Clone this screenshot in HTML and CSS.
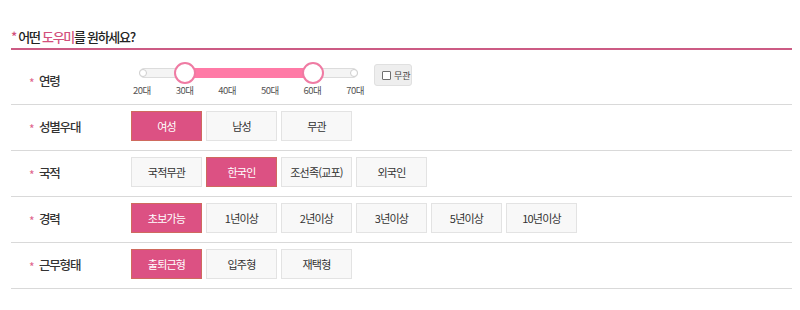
FILE: index.html
```html
<!DOCTYPE html>
<html lang="ko">
<head>
<meta charset="utf-8">
<link rel="stylesheet" href="styles.css">
</head>
<body>
<div class="wrap">
  <h2 class="title"><span class="pink">*</span> 어떤 <span class="pink">도우미</span>를 원하세요?</h2>

  <div class="row row-age">
    <div class="label"><span class="star">*</span>연령</div>
    <div class="slider">
      <div class="track"></div>
      <div class="fill"></div>
      <span class="dot dot-l"></span>
      <span class="dot dot-r"></span>
      <span class="handle h1"></span>
      <span class="handle h2"></span>
      <div class="ticks">
        <span>20대</span><span>30대</span><span>40대</span><span>50대</span><span>60대</span><span>70대</span>
      </div>
    </div>
    <label class="any"><span class="box"></span>무관</label>
  </div>

  <div class="row">
    <div class="label"><span class="star">*</span>성별우대</div>
    <div class="opts">
      <span class="btn on">여성</span><span class="btn">남성</span><span class="btn">무관</span>
    </div>
  </div>

  <div class="row">
    <div class="label"><span class="star">*</span>국적</div>
    <div class="opts">
      <span class="btn">국적무관</span><span class="btn on">한국인</span><span class="btn">조선족(교포)</span><span class="btn">외국인</span>
    </div>
  </div>

  <div class="row">
    <div class="label"><span class="star">*</span>경력</div>
    <div class="opts">
      <span class="btn on">초보가능</span><span class="btn">1년이상</span><span class="btn">2년이상</span><span class="btn">3년이상</span><span class="btn">5년이상</span><span class="btn">10년이상</span>
    </div>
  </div>

  <div class="row">
    <div class="label"><span class="star">*</span>근무형태</div>
    <div class="opts">
      <span class="btn on">출퇴근형</span><span class="btn">입주형</span><span class="btn">재택형</span>
    </div>
  </div>
</div>
</body>
</html>
```

FILE: styles.css
```css
* { box-sizing: border-box; }
body {
  margin: 0;
  background: #fff;
  font-family: "Noto Sans CJK KR", "Noto Sans", sans-serif;
  color: #333;
}
.wrap {
  margin: 0 8px 0 11px;
  padding-top: 28px;
}
.title {
  margin: 0;
  padding-bottom: 2px;
  font-size: 13px;
  line-height: 18px;
  font-weight: 500;
  letter-spacing: -1.3px;
  color: #222;
  border-bottom: 2px solid #cc5b84;
}
.pink { color: #d2507c; }

.row {
  display: flex;
  align-items: center;
  border-bottom: 1px solid #d9d9d9;
  padding: 6px 0 9px;
}
.label {
  width: 120px;
  flex: none;
  padding-left: 18px;
  font-size: 12.5px;
  font-weight: 500;
  letter-spacing: -1.2px;
  color: #333;
  display: flex;
  align-items: center;
}
.star {
  color: #e0648e;
  font-size: 12px;
  width: 10px;
  font-weight: 400;
  position: relative;
  top: 2px;
}
.opts {
  display: flex;
  gap: 4px;
}
.btn {
  width: 71px;
  height: 30px;
  display: flex;
  align-items: center;
  justify-content: center;
  font-size: 11px;
  letter-spacing: -0.8px;
  background: #f8f8f8;
  border: 1px solid #e3e3e3;
  color: #333;
}
.btn.on {
  background: #dc5183;
  border-color: #cf6a5e;
  color: #fff;
}

/* age row */
.row-age {
  align-items: flex-start;
  padding: 12px 0 8px;
}
.row-age .label { margin-top: 9px; }
.slider {
  position: relative;
  width: 235px;
  height: 34px;
  padding-top: 23px;
}
.track {
  position: absolute;
  left: 8px;
  top: 6px;
  width: 219px;
  height: 10px;
  border: 1px solid #dcdcdc;
  border-radius: 5px;
  background: #f4f4f4;
}
.fill {
  position: absolute;
  left: 54px;
  top: 6px;
  width: 128px;
  height: 10px;
  background: #ff7aa6;
}
.dot {
  position: absolute;
  top: 7px;
  width: 8px;
  height: 8px;
  border-radius: 50%;
  background: #fff;
  border: 1px solid #cfcfcf;
}
.dot-l { left: 8px; }
.dot-r { left: 219px; }
.handle {
  position: absolute;
  top: 0;
  width: 22px;
  height: 22px;
  border-radius: 50%;
  background: #fff;
  border: 2px solid #ef7ba3;
}
.h1 { left: 43px; }
.h2 { left: 171px; }
.ticks {
  display: flex;
  justify-content: space-between;
  margin-left: 2px;
  width: 231px;
  font-size: 9.5px;
  line-height: 11px;
  letter-spacing: -0.5px;
  color: #555;
}
.any {
  margin: 2px 0 0 8px;
  width: 38px;
  height: 22px;
  display: flex;
  align-items: center;
  gap: 3px;
  padding-left: 7px;
  background: #eeeeee;
  border: 1px solid #e0e0e0;
  border-radius: 3px;
  font-size: 9px;
  color: #444;
}
.box {
  width: 9px;
  height: 9px;
  border: 1px solid #6f6f6f;
  border-radius: 1px;
  background: #fff;
  flex: none;
}
```
